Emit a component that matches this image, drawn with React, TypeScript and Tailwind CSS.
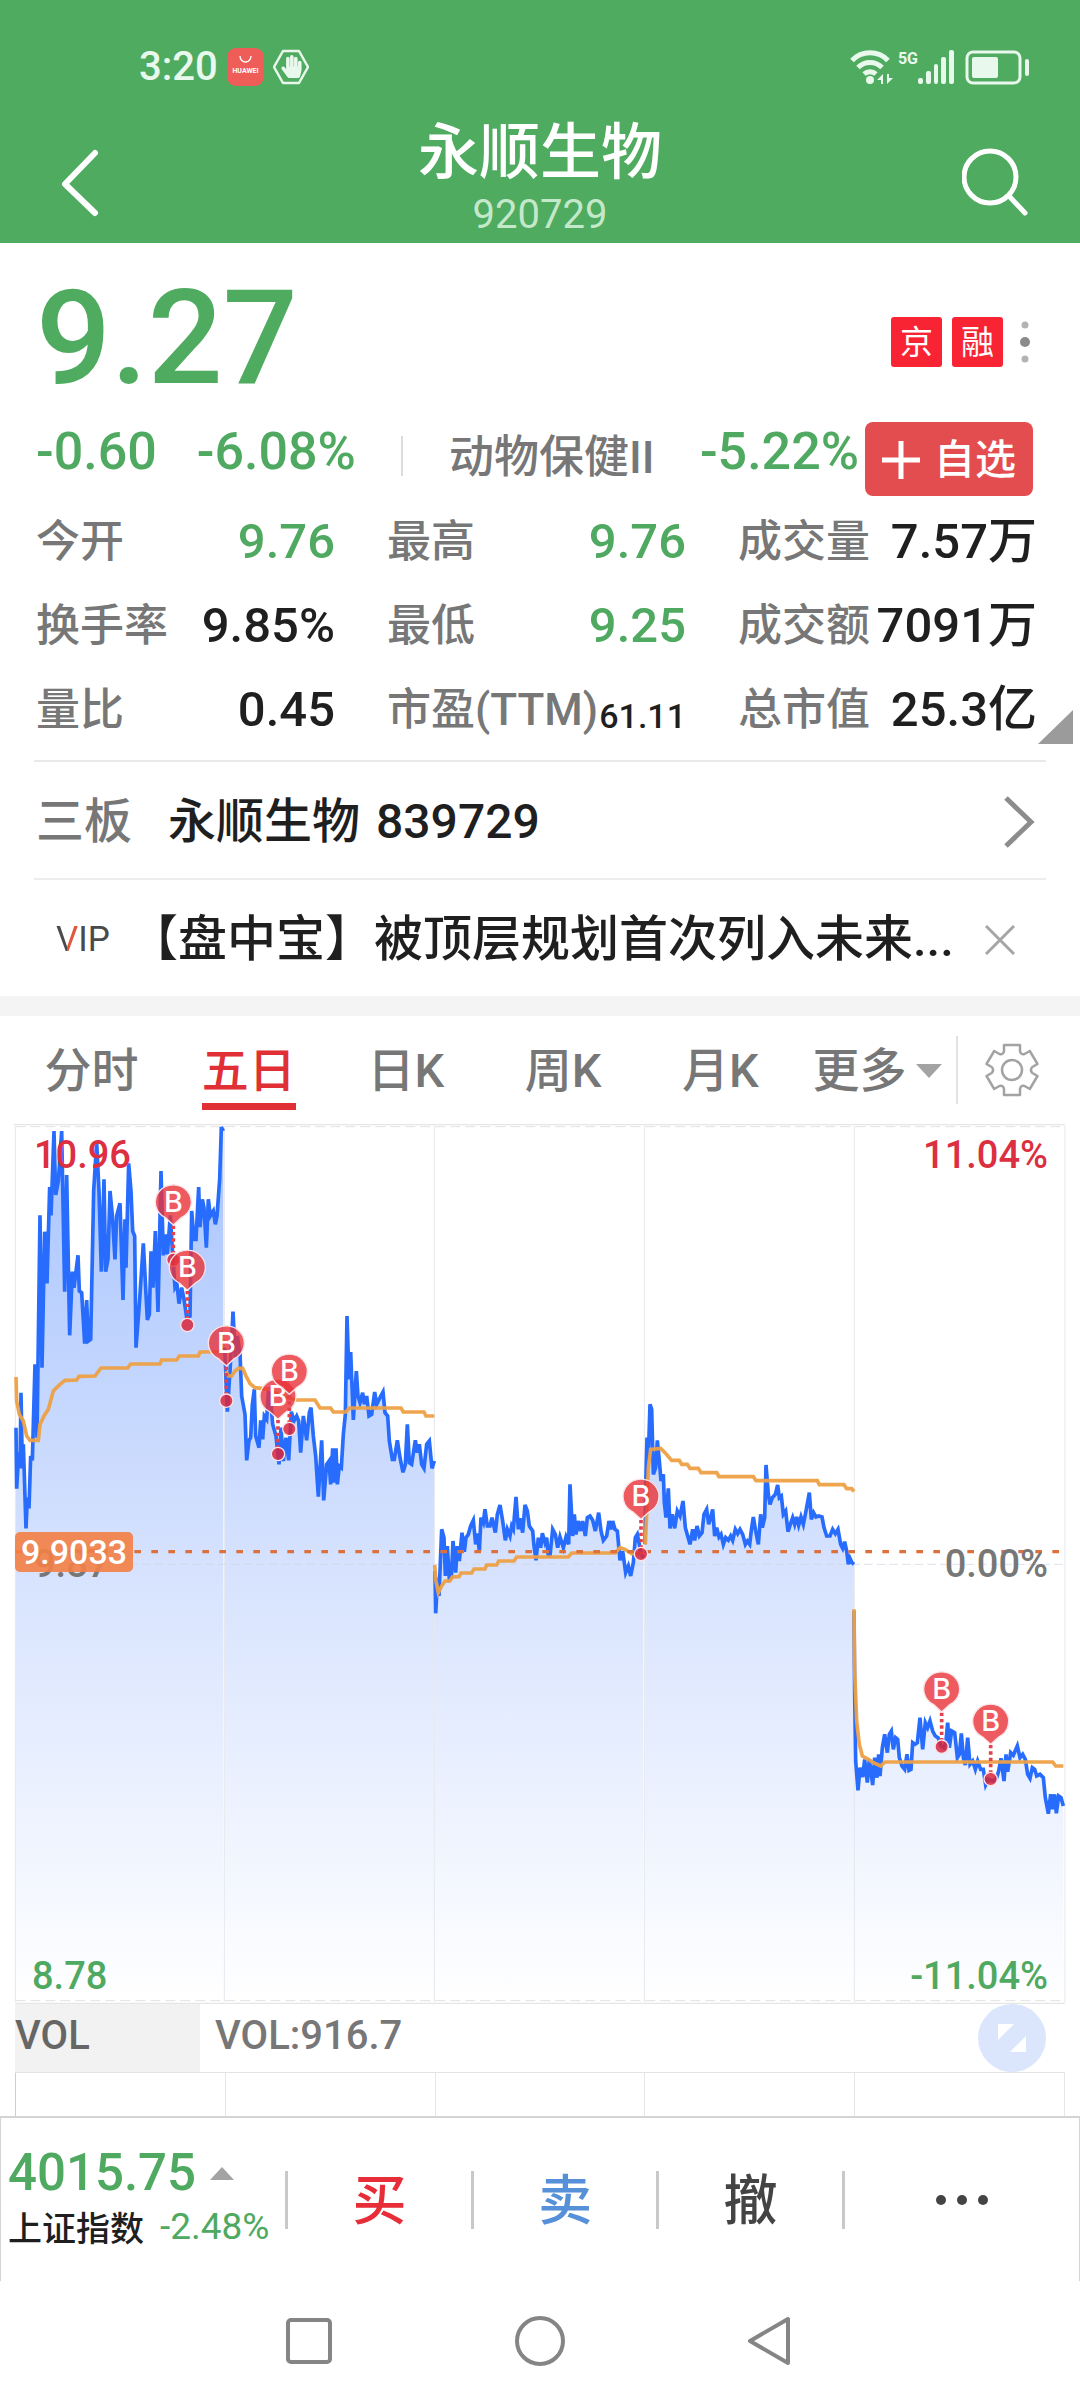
import { FaHandPaper } from "react-icons/fa";
import clsx from "clsx";

type Point = [number, number];

interface Session {
  // origin of the session's points on the chart canvas
  x: number;
  y: number;
  price: Point[];
  average: Point[];
}

const CHART_WIDTH = 3240;
const CHART_HEIGHT = 2640;
const CHART_TOP = 6;
const CHART_BOTTOM = 2634;
const GRID_X = [46, 673, 1303, 1933, 2563, 3195];

const SESSIONS: Session[] = [
  {
    x: 0,
    y: -9,
    price: [
      [48, 920], [50, 1103], [56, 995], [60, 1042], [63, 815], [67, 1042], [70, 970], [78, 1222],
      [82, 1130], [87, 1162], [92, 1005], [97, 1018], [105, 730], [111, 950], [120, 283], [126, 740],
      [134, 332], [141, 487], [149, 198], [153, 283], [162, 30], [167, 222], [175, 180], [185, 30],
      [194, 512], [200, 162], [209, 643], [217, 452], [222, 500], [234, 403], [238, 510], [245, 515],
      [254, 668], [260, 537], [265, 660], [272, 655], [281, 210], [290, 65], [297, 210], [304, 452],
      [312, 175], [317, 452], [324, 415], [330, 210], [337, 283], [345, 415], [350, 285], [360, 247],
      [369, 537], [375, 295], [378, 440], [386, 127], [393, 210], [398, 330], [404, 345], [408, 680],
      [418, 550], [430, 367], [442, 597], [448, 580], [453, 391], [459, 500], [466, 330], [474, 573],
      [483, 150], [490, 403], [496, 340], [502, 400], [511, 283], [518, 400], [525, 500], [531, 490],
      [537, 548], [545, 500], [552, 535], [560, 590], [570, 585], [575, 270], [582, 355], [588, 355],
      [596, 198], [600, 318], [607, 235], [612, 260], [619, 380], [625, 235], [631, 285], [640, 270],
      [646, 310], [651, 285], [659, 175], [664, 18], [670, 30],
    ],
    average: [
      [48, 768], [50, 840], [58, 880], [70, 900], [80, 945], [90, 958], [115, 958], [120, 910],
      [132, 885], [145, 865], [160, 810], [180, 790], [195, 778], [230, 777], [237, 766], [285, 765],
      [303, 741], [383, 741], [392, 729], [480, 729], [485, 717], [530, 717], [538, 705], [595, 705],
      [600, 693], [670, 692],
    ],
  },
  {
    x: 660,
    y: 471,
    price: [
      [14, 200], [22, 392], [30, 270], [39, 92], [46, 230], [52, 165], [60, 215], [65, 345],
      [75, 400], [80, 538], [87, 478], [92, 470], [97, 370], [103, 325], [107, 465], [117, 500],
      [122, 418], [128, 475], [133, 405], [140, 415], [146, 320], [150, 330], [158, 430], [168, 465],
      [177, 550], [183, 440], [190, 540], [198, 470], [206, 538], [214, 392], [222, 420], [230, 405],
      [236, 420], [242, 515], [250, 405], [260, 478], [268, 395], [273, 380], [280, 465], [287, 525],
      [295, 647], [305, 478], [311, 658], [320, 550], [327, 540], [332, 610], [338, 502], [343, 605],
      [348, 502], [352, 610], [358, 555], [364, 560], [370, 460], [376, 400], [381, 105], [387, 295],
      [392, 213], [400, 417], [409, 270], [414, 345], [420, 365], [428, 335], [433, 370], [440, 345],
      [447, 405], [455, 400], [464, 333], [470, 370], [480, 350], [489, 333], [495, 395], [503, 405],
      [508, 480], [517, 535], [523, 535], [532, 478], [540, 530], [549, 574], [556, 550], [562, 430],
      [568, 545], [575, 550], [586, 478], [592, 515], [598, 490], [605, 550], [612, 562], [620, 490],
      [628, 480], [636, 562], [643, 540],
    ],
    average: [
      [18, 270], [25, 285], [35, 285], [45, 270], [55, 262], [68, 262], [78, 285], [90, 308],
      [105, 320], [150, 325], [180, 345], [230, 357], [285, 357], [300, 381], [332, 381], [340, 393],
      [378, 393], [388, 381], [543, 381], [550, 393], [612, 393], [618, 405], [643, 405],
    ],
  },
  {
    x: 660,
    y: 471,
    price: [
      [645, 870], [647, 997], [653, 890], [657, 945], [665, 745], [672, 770], [676, 885], [682, 795],
      [688, 895], [694, 890], [699, 780], [707, 875], [712, 795], [718, 840], [726, 755], [733, 812],
      [738, 770], [745, 760], [752, 735], [760, 718], [767, 790], [773, 757], [778, 812], [783, 710],
      [790, 725], [795, 685], [802, 735], [810, 735], [816, 710], [826, 755], [832, 700], [840, 672],
      [848, 720], [856, 778], [862, 745], [870, 765], [875, 735], [880, 745], [888, 648], [895, 745],
      [900, 712], [908, 755], [915, 672], [922, 690], [928, 735], [938, 750], [942, 795], [948, 838],
      [955, 770], [962, 800], [967, 757], [975, 785], [980, 770], [985, 825], [990, 825], [998, 745],
      [1006, 760], [1013, 800], [1020, 768], [1030, 800], [1038, 768], [1046, 790], [1050, 610],
      [1058, 765], [1063, 700], [1068, 760], [1075, 720], [1082, 750], [1088, 720], [1096, 765],
      [1102, 710], [1110, 705], [1118, 718], [1126, 750], [1136, 695], [1143, 750], [1150, 778],
      [1160, 765], [1167, 720], [1173, 745], [1178, 720], [1185, 745], [1192, 750], [1200, 838],
      [1208, 810], [1217, 875], [1225, 855], [1232, 885], [1240, 845], [1246, 770], [1252, 760],
      [1258, 790], [1264, 820], [1270, 830],
    ],
    average: [
      [644, 852], [648, 900], [655, 935], [665, 915], [675, 900], [690, 900], [697, 888], [717, 887],
      [723, 876], [755, 876], [762, 864], [795, 864], [800, 852], [830, 852], [836, 840], [882, 840],
      [890, 828], [1045, 828], [1055, 816], [1185, 816], [1200, 800], [1215, 805], [1235, 818],
      [1268, 818],
    ],
  },
  {
    x: 1800,
    y: 771,
    price: [
      [135, 490], [137, 320], [141, 170], [145, 230], [150, 70], [155, 85], [160, 280], [167, 260],
      [172, 178], [178, 240], [183, 300], [190, 280], [193, 365], [198, 410], [205, 322], [210, 442],
      [217, 400], [224, 442], [232, 390], [240, 405], [249, 360], [256, 440], [263, 465], [270, 490],
      [278, 445], [284, 478], [291, 435], [298, 465], [306, 455], [312, 400], [320, 385], [326, 430],
      [332, 410], [338, 385], [344, 465], [350, 440], [357, 468], [363, 460], [370, 490], [377, 470],
      [385, 478], [392, 465], [398, 478], [406, 445], [413, 458], [420, 445], [428, 460], [436, 490],
      [442, 480], [449, 490], [455, 440], [460, 408], [467, 450], [475, 490], [482, 400], [487, 440],
      [494, 410], [498, 252], [505, 340], [510, 370], [517, 350], [526, 340], [533, 312], [538, 350],
      [544, 345], [550, 400], [557, 390], [564, 452], [571, 430], [578, 410], [584, 430], [590, 408],
      [596, 433], [603, 408], [610, 430], [618, 390], [628, 335], [634, 415], [641, 395], [648, 408],
      [656, 405], [666, 408], [672, 440], [680, 465], [690, 465], [698, 445], [706, 458], [714, 445],
      [722, 490], [728, 502], [734, 482], [740, 510], [745, 550], [750, 532], [756, 545], [762, 550],
    ],
    average: [
      [136, 490], [140, 400], [145, 260], [152, 205], [182, 202], [195, 215], [215, 238], [238, 238],
      [245, 250], [262, 250], [270, 262], [295, 262], [303, 275], [350, 275], [357, 287], [460, 287],
      [468, 299], [652, 299], [658, 311], [732, 311], [740, 323], [755, 323], [762, 332],
    ],
  },
  {
    x: 2490,
    y: 1311,
    price: [
      [72, 150], [74, 400], [77, 600], [84, 688], [90, 620], [98, 648], [104, 595], [112, 665],
      [118, 595], [128, 672], [134, 590], [141, 650], [146, 580], [150, 645], [157, 560], [164, 520],
      [172, 575], [178, 520], [184, 510], [190, 565], [197, 530], [203, 535], [208, 590], [216, 615],
      [224, 625], [231, 580], [237, 628], [243, 625], [248, 545], [255, 550], [262, 545], [270, 470],
      [278, 565], [286, 485], [293, 500], [300, 480], [308, 510], [316, 525], [324, 530], [333, 555],
      [342, 560], [348, 540], [353, 485], [358, 560], [365, 510], [374, 515], [382, 590], [388, 580],
      [394, 517], [400, 590], [406, 612], [413, 530], [420, 610], [428, 600], [436, 625], [443, 600],
      [452, 625], [460, 625], [467, 672], [475, 655], [490, 660], [500, 650], [506, 630], [513, 592],
      [522, 660], [528, 580], [533, 632], [542, 575], [550, 583], [562, 555], [570, 590], [578, 580],
      [586, 595], [593, 640], [600, 652], [607, 620], [614, 625], [620, 645], [630, 640], [640, 650],
      [646, 710], [655, 758], [662, 700], [668, 745], [674, 700], [679, 757], [686, 705], [693, 710],
      [700, 735],
    ],
    average: [
      [72, 145], [74, 330], [80, 480], [88, 550], [97, 585], [115, 595], [130, 605], [152, 615],
      [165, 603], [668, 603], [677, 615], [700, 615],
    ],
  },
];

const BUY_MARKERS: Point[] = [
  [520, 233],
  [562, 429],
  [679, 656],
  [834, 816],
  [868, 741],
  [1923, 1116],
  [2825, 1694],
  [2972, 1791],
];

const STATS = [
  { label: "今开", value: "9.76", tone: "text-[#4fa961]" },
  { label: "最高", value: "9.76", tone: "text-[#4fa961]" },
  { label: "成交量", value: "7.57万", tone: "text-[#1f1f1f]" },
  { label: "换手率", value: "9.85%", tone: "text-[#1f1f1f]" },
  { label: "最低", value: "9.25", tone: "text-[#4fa961]" },
  { label: "成交额", value: "7091万", tone: "text-[#1f1f1f]" },
  { label: "量比", value: "0.45", tone: "text-[#1f1f1f]" },
  { label: "市盈(TTM)", value: "61.11", tone: "text-[#1f1f1f]", small: true },
  { label: "总市值", value: "25.3亿", tone: "text-[#1f1f1f]" },
];

const TABS = ["分时", "五日", "日K", "周K", "月K"];

const linePath = (points: Point[], dx: number, dy: number) =>
  points.map(([x, y], i) => `${i === 0 ? "M" : "L"}${x + dx} ${y + dy}`).join("");

const areaPath = ({ price, x, y }: Session) => {
  const first = price[0][0] + x;
  const last = price[price.length - 1][0] + x;
  return `${linePath(price, x, y)}L${last} ${CHART_BOTTOM}L${first} ${CHART_BOTTOM}Z`;
};

const StatusBar = () => (
  <div className="flex h-[110px] items-center justify-between pt-6 pr-[50px] pl-[139px]">
    <div className="flex items-center gap-[9px]">
      <span className="text-[40px] leading-[40px] font-medium text-[#e9f8ec]">3:20</span>
      <svg className="h-[38px] w-[37px]" viewBox="0 0 37 38">
        <rect width="37" height="38" rx="9" fill="#ef5d58" />
        <path d="M13 8a5.5 6 0 0 0 11 0" fill="none" stroke="#fff" strokeWidth="1.3" />
        <text
          x="18.5"
          y="25"
          fill="#fff"
          textAnchor="middle"
          className="text-[7px] font-bold"
        >
          HUAWEI
        </text>
      </svg>
      <svg className="h-[36px] w-[36px] text-[#e9f8ec]" viewBox="0 0 36 36">
        <path
          d="M10 2h16l9 16-9 16H10L1 18z"
          fill="none"
          stroke="currentColor"
          strokeWidth="2.5"
          strokeLinejoin="round"
        />
        <FaHandPaper x="7" y="6" size={23} />
      </svg>
    </div>
    <div className="flex items-center text-[#e9f8ec]">
      <svg className="h-[36px] w-[48px]" viewBox="0 0 48 36" fill="none" stroke="currentColor">
        <path d="M2 11.500a25 25 0 0 1 36 0" strokeWidth="5" />
        <path d="M8 18.500a17 17 0 0 1 24 0" strokeWidth="5" />
        <path d="M14 25a9 9 0 0 1 12 0" strokeWidth="5" />
        <circle cx="20" cy="31" r="4" fill="currentColor" stroke="none" />
        <path d="M33 25v10h-2v-4H27zM37 35v-10h2v4H43z" fill="currentColor" stroke="none" />
      </svg>
      <span className="mb-4 text-[16px] leading-[20px] font-bold">5G</span>
      <svg className="h-[36px] w-[112px]" viewBox="0 0 112 36" fill="currentColor">
        <rect x="0" y="29" width="5" height="6" rx="2" />
        <rect x="8" y="22" width="5" height="13" rx="2" />
        <rect x="16" y="15" width="4" height="20" rx="2" />
        <rect x="23" y="8" width="5" height="27" rx="2" />
        <rect x="31" y="1" width="5" height="34" rx="2" />
        <rect x="49" y="3" width="53" height="31" rx="6" fill="none" stroke="currentColor" strokeWidth="3" />
        <rect x="54" y="8" width="26" height="21" rx="2" />
        <rect x="107" y="10" width="4" height="17" rx="2" />
      </svg>
    </div>
  </div>
);

const Header = () => (
  <header className="bg-[#4fab5f] text-white">
    <StatusBar />
    <div className="flex h-[133px] items-center justify-between px-[50px]">
      <button type="button" aria-label="返回" className="mt-3">
        <svg className="h-[72px] w-[68px]" viewBox="0 0 68 72" fill="none">
          <path d="M45 6 15 37l30 29" stroke="currentColor" strokeWidth="6" strokeLinecap="round" strokeLinejoin="round" />
        </svg>
      </button>
      <div className="text-center">
        <h1 className="text-[61px] leading-[76px] font-medium">永顺生物</h1>
        <p className="text-[40px] leading-[48px] text-[#c4e8ca]">920729</p>
      </div>
      <button type="button" aria-label="搜索" className="mt-3">
        <svg className="h-[70px] w-[68px]" viewBox="0 0 68 70" fill="none" stroke="currentColor" strokeLinecap="round">
          <circle cx="28" cy="29" r="26" strokeWidth="5" />
          <path d="m47 48 16 17" strokeWidth="5" />
        </svg>
      </button>
    </div>
  </header>
);

const Quote = () => (
  <section className="relative px-[34px] pt-[40px]">
    <div className="flex h-[110px] items-center justify-between pr-[13px] pl-[2px]">
      <p className="text-[132px] leading-[108px] font-medium text-[#4fab5f]">9.27</p>
      <div className="flex items-center gap-[10px] pt-2">
        <span className="h-[50px] w-[51px] rounded-[3px] bg-[#f82434] text-center text-[33px] leading-[52px] text-white">京</span>
        <span className="h-[50px] w-[51px] rounded-[3px] bg-[#f82434] text-center text-[33px] leading-[52px] text-white">融</span>
        <button type="button" aria-label="更多信息" className="ml-1">
          <svg className="h-[44px] w-[16px]" viewBox="0 0 16 44" fill="#b3b3b3">
            <circle cx="8" cy="5" r="3.500" />
            <circle cx="8" cy="22" r="5" fill="#8a8a8a" />
            <circle cx="8" cy="39" r="3.500" />
          </svg>
        </button>
      </div>
    </div>

    <div className="mt-[29px] flex h-[74px] items-start justify-between pr-[13px] pl-[2px] text-[52px] leading-[60px] font-medium text-[#4fa961]">
      <div className="flex gap-[40px]">
        <span>-0.60</span>
        <span>-6.08%</span>
      </div>
      <span className="mt-[14px] h-[40px] w-[2px] bg-[#dcdcdc]" />
      <span className="text-[45px] leading-[72px] text-[#777]">动物保健II</span>
      <div className="flex gap-[6px]">
        <span>-5.22%</span>
        <button
          type="button"
          className="flex h-[74px] w-[168px] items-center justify-center gap-[14px] rounded-[8px] bg-[#e44d4f] pt-[2px] text-[41px] leading-[74px] text-white"
        >
          <svg className="h-[38px] w-[38px]" viewBox="0 0 38 38" fill="none" stroke="currentColor" strokeWidth="5">
            <path d="M19 0v38M0 19h38" />
          </svg>
          自选
        </button>
      </div>
    </div>

    <dl className="grid auto-rows-[84px] grid-cols-3 gap-x-[52px] pt-[4px] pr-[9px] pb-[8px] pl-[2px] font-medium">
      {STATS.map(({ label, value, tone, small }) => (
        <div key={label} className="flex items-center justify-between whitespace-nowrap">
          <dt className="text-[44px] leading-[84px] text-[#777]">{label}</dt>
          <dd className={clsx(tone, small ? "pt-3 text-[34px]" : "text-[49px]")}>{value}</dd>
        </div>
      ))}
    </dl>
    <svg className="absolute right-[7px] bottom-[16px] h-[34px] w-[35px]" viewBox="0 0 35 34">
      <path d="M35 0v34H0z" fill="#9b9b9b" />
    </svg>
  </section>
);

const Notices = () => (
  <section className="px-[34px]">
    <a href="#board" className="flex h-[118px] items-center border-t-2 border-[#e9e9e9] pt-1 pr-[10px] pl-[2px] text-[48px] font-medium text-[#1f1f1f]">
      <span className="mr-[36px] text-[#777]">三板</span>
      <span>永顺生物</span>
      <span className="ml-[16px] grow">839729</span>
      <svg className="h-[54px] w-[34px]" viewBox="0 0 34 54" fill="none">
        <path d="M4 3l25 24L4 51" stroke="#8c8c8c" strokeWidth="5" />
      </svg>
    </a>
    <div className="flex h-[118px] items-center border-t-2 border-[#ededed] pt-1 pr-[31px] pl-[22px]">
      <span className="w-[73px] text-[35px] text-[#4a4a4a]">
        <span className="bg-linear-to-r from-[#4a4a4a] from-50% to-[#e2583c] to-50% bg-clip-text text-transparent">V</span>IP
      </span>
      <a href="#news" className="min-w-0 grow truncate text-[49px] font-medium text-[#1f1f1f]">
        【盘中宝】被顶层规划首次列入未来...
      </a>
      <button type="button" aria-label="关闭" className="ml-[20px] shrink-0">
        <svg className="h-[30px] w-[30px]" viewBox="0 0 30 30" fill="none">
          <path d="m1 1 28 28M29 1 1 29" stroke="#a6a6a6" strokeWidth="3" />
        </svg>
      </button>
    </div>
  </section>
);

const GearIcon = () => (
  <svg className="h-[54px] w-[54px]" viewBox="-27 -27 54 54" fill="none" stroke="#a3a3a3" strokeWidth="2.500" strokeLinejoin="round">
    <path d="M-8-25H8V-19Q8.500-15 12.600-16L17.800-19 25.500-6 20.300-3Q17.500 0 20.300 3L25.500 6 17.800 19 12.600 16Q8.500 15 8 19V25H-8V19Q-8.500 15-12.600 16L-17.800 19-25.500 6-20.300 3Q-17.500 0-20.300-3L-25.500-6-17.800-19-12.600-16Q-8.500-15-8-19Z" />
    <circle r="10" />
  </svg>
);

const ChartTabs = () => (
  <nav className="flex h-[108px] items-start pl-[13px] text-[47px] leading-[58px] font-medium text-[#777]">
    {TABS.map((tab) => (
      <div key={tab} className="flex flex-1 justify-center pt-[26px]">
        <button
          type="button"
          className={clsx(
            "border-b-[7px] pb-[3px] whitespace-nowrap",
            tab === "五日" ? "border-[#e03036] text-[#e03036]" : "border-transparent",
          )}
        >
          {tab}
        </button>
      </div>
    ))}
    <button type="button" className="flex flex-1 items-center justify-center gap-[10px] pt-[26px] whitespace-nowrap">
      更多
      <svg className="h-[14px] w-[26px]" viewBox="0 0 26 14">
        <path d="M0 0h26L13 14z" fill="#a3a3a3" />
      </svg>
    </button>
    <span className="mt-[20px] h-[68px] w-[2px] bg-[#e2e2e2]" />
    <button type="button" aria-label="设置" className="flex h-[108px] w-[122px] items-center pl-[27px]">
      <GearIcon />
    </button>
  </nav>
);

const BuyMarker = ({ x, y }: { x: number; y: number }) => (
  <g>
    <path d={`M${x} ${y + 72}v90`} stroke="#e2414d" strokeWidth="11" strokeDasharray="10 9" />
    <circle cx={x} cy={y + 174} r="20" fill="#d9263c" fillOpacity="0.85" stroke="#fbe3e6" strokeWidth="4" />
    <path
      d={`M${x} ${y + 70}L${x - 24} ${y + 48}A54 52 0 1 1 ${x + 24} ${y + 48}Z`}
      fill="#e8323a"
      fillOpacity="0.8"
      stroke="#fbe3e6"
      strokeWidth="4"
    />
    <text x={x} y={y + 31} fill="#fff" textAnchor="middle" className="font-[Inter,sans-serif] text-[86px] font-medium">
      B
    </text>
  </g>
);

const PriceChart = () => (
  <div className="relative text-[38px] leading-[40px] font-medium">
    <svg className="block h-auto w-full" viewBox={`0 0 ${CHART_WIDTH} ${CHART_HEIGHT}`} fill="none">
      <defs>
        <linearGradient id="area" gradientUnits="userSpaceOnUse" x1="0" y1={CHART_TOP} x2="0" y2={CHART_BOTTOM}>
          <stop offset="0" stopColor="#a9c5fe" />
          <stop offset="0.5" stopColor="#d6e2fe" />
          <stop offset="1" stopColor="#ffffff" />
        </linearGradient>
      </defs>
      {SESSIONS.map((session) => (
        <path key={areaPath(session)} d={areaPath(session)} fill="url(#area)" />
      ))}
      <path d={`M42 2H3195M46 ${CHART_BOTTOM + 4}H3195`} stroke="#e6e6e6" strokeWidth="4" />
      <path d={`M46 8H3195M46 ${CHART_BOTTOM - 4}H3195`} stroke="#e2e2e2" strokeWidth="3" strokeDasharray="30 15" />
      {GRID_X.map((x) => (
        <path key={x} d={`M${x} ${CHART_TOP}V${CHART_BOTTOM}`} stroke="#e4e7ec" strokeWidth="3" />
      ))}
      <path d="M46 1321H3195" stroke="#cfd4de" strokeOpacity="0.7" strokeWidth="3" strokeDasharray="26 12" />
      {SESSIONS.map((session) => (
        <path
          key={areaPath(session)}
          d={linePath(session.price, session.x, session.y)}
          stroke="#276cfd"
          strokeWidth="11"
        />
      ))}
      {SESSIONS.map((session) => (
        <path
          key={areaPath(session)}
          d={linePath(session.average, session.x, session.y)}
          stroke="#eda045"
          strokeWidth="11"
          strokeOpacity="0.95"
        />
      ))}
      <path d="M46 1283H3195" stroke="#dd713c" strokeWidth="10" strokeDasharray="20 31" />
      {BUY_MARKERS.map(([x, y]) => (
        <BuyMarker key={x} x={x} y={y} />
      ))}
    </svg>
    <span className="absolute top-[11px] left-[34px] text-[#dc2f3f]">10.96</span>
    <span className="absolute top-[11px] right-[32px] text-[#dc2f3f]">11.04%</span>
    <span className="absolute top-1/2 left-[34px] mt-[-20px] text-[#777]">9.87</span>
    <span className="absolute top-1/2 left-[15px] mt-[-32px] rounded-[5px] bg-[#f47f45]/90 px-[6px] text-[34px] text-white">
      9.9033
    </span>
    <span className="absolute top-1/2 right-[32px] mt-[-20px] text-[#777]">0.00%</span>
    <span className="absolute bottom-[8px] left-[32px] text-[#4fa961]">8.78</span>
    <span className="absolute right-[32px] bottom-[8px] text-[#4fa961]">-11.04%</span>
  </div>
);

const Volume = () => (
  <section className="px-[15px]">
    <div className="flex h-[69px] items-center border-b border-[#e3e3e3] pr-[19px] text-[40px] leading-[60px] font-medium text-[#777]">
      <button type="button" className="h-[68px] w-[185px] bg-[#f2f2f2] pb-1 text-left text-[#666]">
        VOL
      </button>
      <span className="grow pb-1 pl-[15px]">VOL:916.7</span>
      <button type="button" aria-label="全屏">
        <svg className="h-[68px] w-[68px]" viewBox="0 0 68 68">
          <circle cx="34" cy="34" r="34" fill="#dbe6fd" />
          <path d="M20 20h16L20 36zM48 32v16H32z" fill="#fff" />
        </svg>
      </button>
    </div>
    <div className="grid h-[43px] grid-cols-5 border-l border-[#b9dcbf]">
      {[0, 1, 2, 3, 4].map((day) => (
        <div key={day} className="border-r border-[#e6e6e6]" />
      ))}
    </div>
  </section>
);

const TradeBar = () => (
  <footer className="grid h-[165px] grid-cols-[284px_186fr_185fr_185fr_237fr] items-center border-x border-t-2 border-[#d4d4d4]">
    <a href="#index" className="self-start pt-[27px] pl-[7px] whitespace-nowrap">
      <div className="flex items-center gap-[14px] text-[51px] leading-[56px] font-medium text-[#4fa961]">
        4015.75
        <svg className="h-[13px] w-[24px]" viewBox="0 0 24 13">
          <path d="M12 0l12 13H0z" fill="#a3a3a3" />
        </svg>
      </div>
      <div className="flex items-center gap-[16px] text-[34px] leading-[48px] text-[#4fa961]">
        <span className="pt-1 font-medium text-[#1f1f1f]">上证指数</span>
        <span className="text-[37px]">-2.48%</span>
      </div>
    </a>
    <TradeButton label="买" tone="text-[#e72d38]" />
    <TradeButton label="卖" tone="text-[#5690d8]" />
    <TradeButton label="撤" tone="text-[#444]" />
    <button type="button" aria-label="更多操作" className="flex h-[58px] items-center justify-center border-l-[3px] border-[#c9c9c9]">
      <svg className="h-[12px] w-[54px]" viewBox="0 0 54 12" fill="#444">
        <circle cx="6" cy="6" r="5" />
        <circle cx="27" cy="6" r="5" />
        <circle cx="48" cy="6" r="5" />
      </svg>
    </button>
  </footer>
);

const TradeButton = ({ label, tone }: { label: string; tone: string }) => (
  <button
    type="button"
    className={clsx("h-[58px] border-l-[3px] border-[#c9c9c9] pt-[2px] text-[54px] leading-[58px] font-medium", tone)}
  >
    {label}
  </button>
);

const SystemNav = () => (
  <div className="flex h-[119px] items-center justify-center gap-[181px]">
    <button type="button" aria-label="最近任务">
      <svg className="h-[50px] w-[50px]" viewBox="0 0 50 50" fill="none">
        <rect x="4" y="4" width="42" height="42" rx="3" stroke="#858585" strokeWidth="4" />
      </svg>
    </button>
    <button type="button" aria-label="主屏幕">
      <svg className="h-[50px] w-[50px]" viewBox="0 0 50 50" fill="none">
        <circle cx="25" cy="25" r="23" stroke="#858585" strokeWidth="4" />
      </svg>
    </button>
    <button type="button" aria-label="返回上一页">
      <svg className="h-[50px] w-[50px]" viewBox="0 0 50 50" fill="none">
        <path d="M42 3v44L4 25z" stroke="#858585" strokeWidth="4" strokeLinejoin="round" />
      </svg>
    </button>
  </div>
);

export default function App() {
  return (
    <main className="w-full bg-white font-[Roboto,'Noto_Sans_CJK_SC',sans-serif]">
      <Header />
      <Quote />
      <Notices />
      <div className="h-[20px] bg-[#f4f4f4]" />
      <ChartTabs />
      <PriceChart />
      <Volume />
      <TradeBar />
      <SystemNav />
    </main>
  );
}
